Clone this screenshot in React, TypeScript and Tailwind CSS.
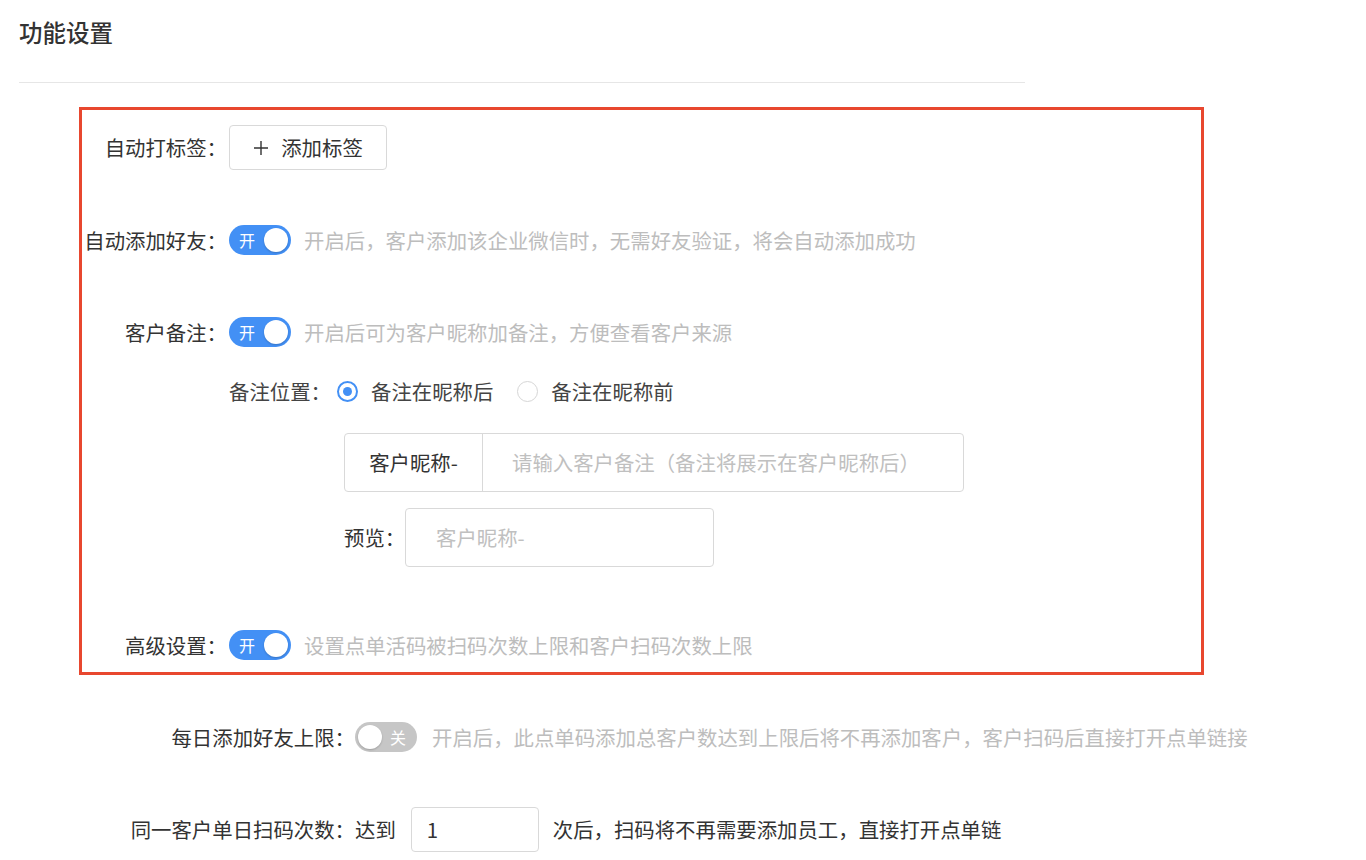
import React from "react";

function Toggle({ on }: { on: boolean }) {
  return on ? (
    <div className="relative flex h-[30px] w-[62px] shrink-0 items-center rounded-full bg-[#4390f5]">
      <span className="pl-[10px] text-[16px] leading-none text-white">开</span>
      <span className="absolute right-[3px] top-[3px] h-[24px] w-[24px] rounded-full bg-white shadow-[0_1px_2px_rgba(0,0,0,0.2)]" />
    </div>
  ) : (
    <div className="relative flex h-[30px] w-[62px] shrink-0 items-center justify-end rounded-full bg-[#c6c6c6]">
      <span className="pr-[11px] text-[16px] leading-none text-white">关</span>
      <span className="absolute left-[3px] top-[3px] h-[24px] w-[24px] rounded-full bg-white shadow-[0_1px_2px_rgba(0,0,0,0.2)]" />
    </div>
  );
}

function Radio({ checked, label }: { checked: boolean; label: string }) {
  return (
    <div className="flex items-center">
      {checked ? (
        <span className="flex h-[21px] w-[21px] items-center justify-center rounded-full border-2 border-[#4390f5]">
          <span className="h-[9px] w-[9px] rounded-full bg-[#4390f5]" />
        </span>
      ) : (
        <span className="h-[21px] w-[21px] rounded-full border border-[#d6d6d6]" />
      )}
      <span className="ml-[13px] text-[#444]">{label}</span>
    </div>
  );
}

function Label({ text }: { text: string }) {
  return <div className="w-[147px] shrink-0 whitespace-nowrap pr-[2px] text-right text-[#333]">{text}：</div>;
}

export default function App() {
  return (
    <div
      className="min-h-[860px] bg-white px-[19px] pt-[16px] text-[20.4px] leading-none"
      style={{ fontFamily: '"Noto Sans CJK SC", "Noto Sans", sans-serif' }}
    >
      <h1 className="text-[23.5px] font-medium leading-[32px] text-[#333]">功能设置</h1>
      <div className="mt-[34px] h-px w-[1006px] bg-[#e6e6e6]" />

      {/* 高亮区域 */}
      <div className="ml-[60px] mt-[24px] w-[1125px] border-[3px] border-[#e8472f] pb-[12px] pt-[15px]">
        <div className="flex h-[45px] items-center">
          <Label text="自动打标签" />
          <button className="flex h-[45px] w-[158px] items-center justify-center rounded-[4px] border border-[#d9d9d9] bg-white text-[#333]">
            <svg width="16" height="16" viewBox="0 0 16 16" className="mr-[12px]">
              <path d="M8 1v14M1 8h14" stroke="#333" strokeWidth="1.4" fill="none" />
            </svg>
            添加标签
          </button>
        </div>

        <div className="mt-[55px] flex h-[30px] items-center">
          <Label text="自动添加好友" />
          <Toggle on />
          <span className="ml-[13px] whitespace-nowrap text-[#bdbdbd]">开启后，客户添加该企业微信时，无需好友验证，将会自动添加成功</span>
        </div>

        <div className="mt-[62px] flex h-[30px] items-center">
          <Label text="客户备注" />
          <Toggle on />
          <span className="ml-[13px] whitespace-nowrap text-[#bdbdbd]">开启后可为客户昵称加备注，方便查看客户来源</span>
        </div>

        <div className="mt-[29px] flex h-[30px] items-center pl-[147px]">
          <span className="w-[108px] shrink-0 whitespace-nowrap text-[#444]">备注位置：</span>
          <Radio checked label="备注在昵称后" />
          <span className="w-[24px]" />
          <Radio checked={false} label="备注在昵称前" />
        </div>

        <div className="ml-[262px] mt-[27px] flex h-[59px] w-[620px] overflow-hidden rounded-[4px] border border-[#d9d9d9]">
          <div className="flex w-[138px] items-center justify-center border-r border-[#d9d9d9] text-[#333]">客户昵称-</div>
          <div className="flex flex-1 items-center pl-[29px] text-[#c0c0c0]">请输入客户备注（备注将展示在客户昵称后）</div>
        </div>

        <div className="ml-[262px] mt-[16px] flex h-[59px] items-center">
          <span className="w-[61px] shrink-0 whitespace-nowrap text-[#333]">预览：</span>
          <div className="flex h-[59px] w-[309px] items-center rounded-[4px] border border-[#d9d9d9] pl-[30px] text-[#c0c0c0]">客户昵称-</div>
        </div>

        <div className="mt-[63px] flex h-[30px] items-center">
          <Label text="高级设置" />
          <Toggle on />
          <span className="ml-[13px] whitespace-nowrap text-[#bdbdbd]">设置点单活码被扫码次数上限和客户扫码次数上限</span>
        </div>
      </div>

      {/* 高级设置内容 */}
      <div className="mt-[47px] flex h-[30px] items-center">
        <div className="w-[336px] shrink-0 whitespace-nowrap text-right text-[#333]">每日添加好友上限：</div>
        <Toggle on={false} />
        <span className="ml-[15px] whitespace-nowrap text-[#bdbdbd]">开启后，此点单码添加总客户数达到上限后将不再添加客户，客户扫码后直接打开点单链接</span>
      </div>

      <div className="mt-[55px] flex h-[45px] items-center">
        <div className="w-[336px] shrink-0 whitespace-nowrap text-right text-[#333]">同一客户单日扫码次数：</div>
        <span className="text-[#333]">达到</span>
        <div className="ml-[15px] flex h-[45px] w-[128px] items-center rounded-[4px] border border-[#d9d9d9] pl-[15px] text-[#333]">1</div>
        <span className="ml-[14px] whitespace-nowrap text-[#333]">次后，扫码将不再需要添加员工，直接打开点单链</span>
      </div>
    </div>
  );
}
